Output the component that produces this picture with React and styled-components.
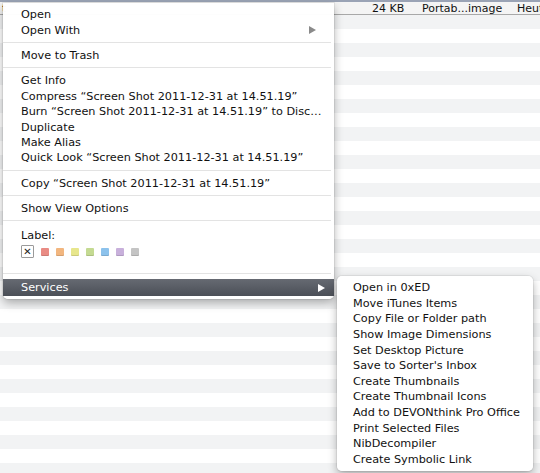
import React from "react";
import styled, { createGlobalStyle } from "styled-components";

const Global = createGlobalStyle`
  html, body { margin: 0; padding: 0; background: #fff; overflow: hidden; }
  * { box-sizing: border-box; }
`;

const Stage = styled.div`
  position: relative;
  width: 540px;
  height: 473px;
  overflow: hidden;
  background: #fff;
  font-family: "DejaVu Sans", "Liberation Sans", sans-serif;
  font-size: 11.25px;
  color: #111;
`;

const FileList = styled.div`
  display: flex;
  flex-direction: column;
  border-top: 2px solid #9aa3b5;
`;

const FileRow = styled.div`
  display: grid;
  grid-template-columns: 370px 50px 95px 1fr;
  align-items: center;
  height: 13px;
  border-bottom: 1px solid #a8a8a8;
  background: #f4f4f4;
  padding-left: 2px;
  font-size: 11px;
  white-space: nowrap;
  overflow: hidden;
`;

const Stripe = styled.div`
  height: 14px;
  background: ${(p) => (p.$alt ? "#f2f3f4" : "#ffffff")};
`;

const Menu = styled.div`
  position: absolute;
  left: 3px;
  top: 3px;
  width: 331px;
  padding: 4px 0 3px;
  background: rgba(255, 255, 255, 0.98);
  border-radius: 0 0 5px 5px;
  box-shadow: 0 4px 10px rgba(0, 0, 0, 0.3), 0 0 0 1px rgba(0, 0, 0, 0.06);
  display: flex;
  flex-direction: column;
`;

const SubMenu = styled(Menu)`
  left: 337px;
  top: 276px;
  width: 196px;
  padding: 4px 0 4px;
  border-radius: 5px;
`;

const Item = styled.div`
  display: flex;
  align-items: center;
  justify-content: space-between;
  height: ${(p) => (p.$h ? p.$h : 15.4)}px;
  padding: 0 ${(p) => (p.$pr ? p.$pr : 10)}px 0 18px;
  white-space: nowrap;
  color: ${(p) => (p.$active ? "#fff" : "#111")};
  background: ${(p) =>
    p.$active ? "linear-gradient(#666a72, #4b4f57)" : "transparent"};
`;

const SubItem = styled(Item)`
  padding-left: 16px;
  height: 15.6px;
`;

const Separator = styled.div`
  height: 1px;
  margin: 4px 3px 5px 0;
  background: #e3e3e3;
`;

const Arrow = styled.span`
  width: 0;
  height: 0;
  border-top: 4px solid transparent;
  border-bottom: 4px solid transparent;
  border-left: 7px solid ${(p) => (p.$light ? "#fff" : "#8a8a8a")};
`;

const LabelBlock = styled.div`
  display: flex;
  flex-direction: column;
  gap: 3px;
  padding: 3px 0 11px 18px;
`;

const Swatches = styled.div`
  display: flex;
  align-items: center;
  gap: 7px;
`;

const NoneBox = styled.div`
  width: 13px;
  height: 13px;
  border: 1px solid #9a9a9a;
  border-radius: 1px;
  display: flex;
  align-items: center;
  justify-content: center;
  font-size: 10px;
  line-height: 1;
  color: #222;
`;

const Swatch = styled.div`
  width: 8px;
  height: 8px;
  border-radius: 1px;
  background: ${(p) => p.$c};
  box-shadow: inset 0 -1px 0 rgba(0, 0, 0, 0.12);
`;

const swatchColors = ["#e98b84", "#f2b67f", "#e7e68c", "#c4da92", "#8cc2ec", "#c8b0db", "#c4c4c4"];

const services = [
  "Open in 0xED",
  "Move iTunes Items",
  "Copy File or Folder path",
  "Show Image Dimensions",
  "Set Desktop Picture",
  "Save to Sorter's Inbox",
  "Create Thumbnails",
  "Create Thumbnail Icons",
  "Add to DEVONthink Pro Office",
  "Print Selected Files",
  "NibDecompiler",
  "Create Symbolic Link",
];

export default function App() {
  const stripes = Array.from({ length: 33 }, (_, i) => i);
  return (
    <>
      <Global />
      <Stage>
        <FileList>
          <FileRow>
            <span>t</span>
            <span>24 KB</span>
            <span>Portab...image</span>
            <span>Heute</span>
          </FileRow>
          {stripes.map((i) => (
            <Stripe key={i} $alt={i % 2 === 0} />
          ))}
        </FileList>

        <Menu>
          <Item>Open</Item>
          <Item $pr={18}>
            Open With <Arrow />
          </Item>
          <Separator />
          <Item>Move to Trash</Item>
          <Separator />
          <Item>Get Info</Item>
          <Item>Compress “Screen Shot 2011-12-31 at 14.51.19”</Item>
          <Item>Burn “Screen Shot 2011-12-31 at 14.51.19” to Disc…</Item>
          <Item>Duplicate</Item>
          <Item>Make Alias</Item>
          <Item>Quick Look “Screen Shot 2011-12-31 at 14.51.19”</Item>
          <Separator />
          <Item>Copy “Screen Shot 2011-12-31 at 14.51.19”</Item>
          <Separator />
          <Item>Show View Options</Item>
          <Separator />
          <LabelBlock>
            <span>Label:</span>
            <Swatches>
              <NoneBox>✕</NoneBox>
              {swatchColors.map((c) => (
                <Swatch key={c} $c={c} />
              ))}
            </Swatches>
          </LabelBlock>
          <Separator />
          <Item $active $h={17} $pr={9}>
            Services <Arrow $light />
          </Item>
        </Menu>

        <SubMenu>
          {services.map((s) => (
            <SubItem key={s}>{s}</SubItem>
          ))}
        </SubMenu>
      </Stage>
    </>
  );
}
